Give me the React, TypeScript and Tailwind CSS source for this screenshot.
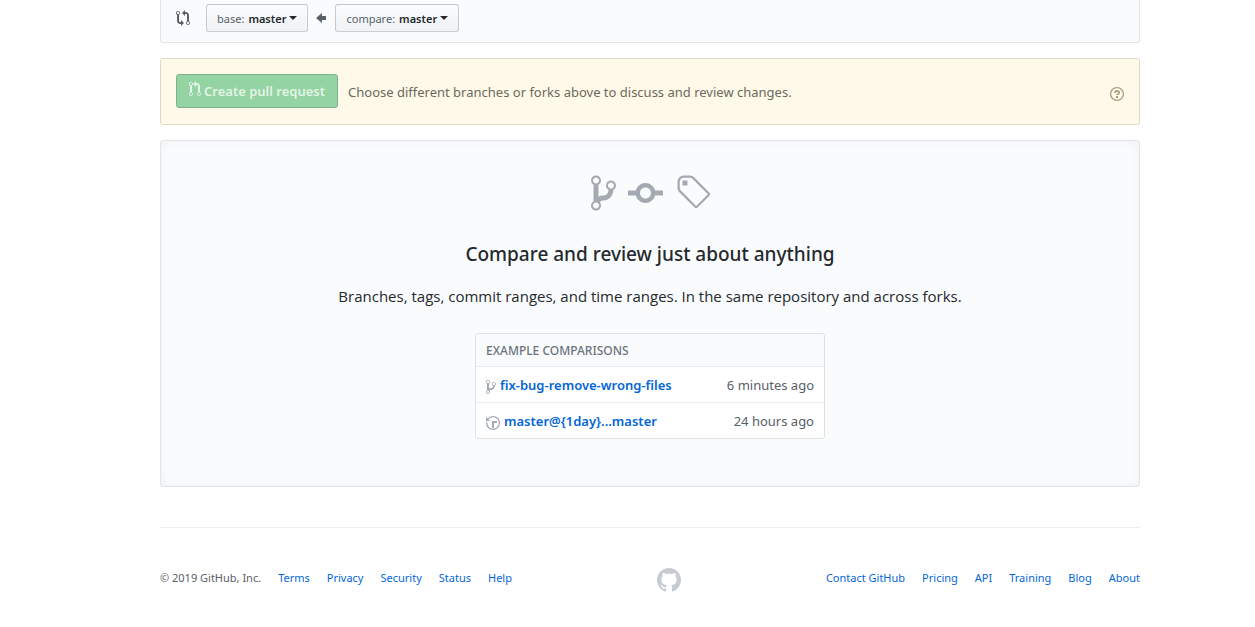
type IconProps = { path: string; box: string; className: string };

function Icon({ path, box, className }: IconProps) {
  return (
    <svg viewBox={box} className={className} fill="currentColor" fillRule="evenodd" aria-hidden="true">
      <path d={path} />
    </svg>
  );
}

const compareIcon =
  "M5 12H4c-.27-.02-.48-.11-.69-.31-.21-.2-.3-.42-.31-.69V4.72A1.993 1.993 0 0 0 2 1a1.993 1.993 0 0 0-1 3.72V11c.03.78.34 1.47.94 2.06.6.59 1.28.91 2.06.94h1v2l3-3-3-3v2zM2 1.8c.66 0 1.2.55 1.2 1.2 0 .65-.55 1.2-1.2 1.2C1.35 4.2.8 3.65.8 3c0-.65.55-1.2 1.2-1.2zm11 9.48V5c-.03-.78-.34-1.47-.94-2.06-.6-.59-1.28-.91-2.06-.94H9V0L6 3l3 3V4h1c.27.02.48.11.69.31.21.2.3.42.31.69v6.28A1.993 1.993 0 0 0 12 15a1.993 1.993 0 0 0 1-3.72zm-1 2.92c-.66 0-1.2-.55-1.2-1.2 0-.65.55-1.2 1.2-1.2.65 0 1.2.55 1.2 1.2 0 .65-.55 1.2-1.2 1.2z";
const pullIcon =
  "M11 11.28V5c-.03-.78-.34-1.47-.94-2.06C9.46 2.35 8.78 2.03 8 2H7V0L4 3l3 3V4h1c.27.02.48.11.69.31.21.2.3.42.31.69v6.28A1.993 1.993 0 0 0 10 15a1.993 1.993 0 0 0 1-3.72zm-1 2.92c-.66 0-1.2-.55-1.2-1.2 0-.65.55-1.2 1.2-1.2.65 0 1.2.55 1.2 1.2 0 .65-.55 1.2-1.2 1.2zM4 3c0-1.11-.89-2-2-2a1.993 1.993 0 0 0-1 3.72v6.56A1.993 1.993 0 0 0 2 15a1.993 1.993 0 0 0 1-3.72V4.72c.59-.34 1-.98 1-1.72zm-.8 10c0 .66-.55 1.2-1.2 1.2-.65 0-1.2-.55-1.2-1.2 0-.65.55-1.2 1.2-1.2.65 0 1.2.55 1.2 1.2zM2 4.2C1.34 4.2.8 3.65.8 3c0-.65.55-1.2 1.2-1.2.65 0 1.2.55 1.2 1.2 0 .65-.55 1.2-1.2 1.2z";
const branchIcon =
  "M10 5c0-1.11-.89-2-2-2a1.993 1.993 0 0 0-1 3.72v.3c-.02.52-.23.98-.63 1.38-.4.4-.86.61-1.38.63-.83.02-1.48.16-2 .45V4.72a1.993 1.993 0 0 0-1-3.72C.88 1 0 1.89 0 3a2 2 0 0 0 1 1.72v6.56c-.59.35-1 .99-1 1.72 0 1.11.89 2 2 2 1.11 0 2-.89 2-2 0-.53-.2-1-.53-1.36.09-.06.48-.41.59-.47.25-.11.56-.17.94-.17 1.05-.05 1.95-.45 2.75-1.25S8.95 7.77 9 6.73h-.02C9.59 6.37 10 5.73 10 5zM2 1.8c.66 0 1.2.55 1.2 1.2 0 .65-.55 1.2-1.2 1.2C1.35 4.2.8 3.65.8 3c0-.65.55-1.2 1.2-1.2zm0 12.41c-.66 0-1.2-.55-1.2-1.2 0-.65.55-1.2 1.2-1.2.65 0 1.2.55 1.2 1.2 0 .65-.55 1.2-1.2 1.2zm6-8c-.66 0-1.2-.55-1.2-1.2 0-.65.55-1.2 1.2-1.2.65 0 1.2.55 1.2 1.2 0 .65-.55 1.2-1.2 1.2z";
const commitIcon =
  "M10.86 7c-.45-1.72-2-3-3.86-3-1.86 0-3.41 1.28-3.86 3H0v2h3.14c.45 1.72 2 3 3.86 3 1.86 0 3.41-1.28 3.86-3H14V7h-3.14zM7 10.2c-1.22 0-2.2-.98-2.2-2.2 0-1.22.98-2.2 2.2-2.2 1.22 0 2.2.98 2.2 2.2 0 1.22-.98 2.2-2.2 2.2z";
const tagIcon =
  "M7.685 1.72a2.49 2.49 0 0 0-1.76-.726H3.48A2.5 2.5 0 0 0 .994 3.48v2.456c0 .656.269 1.292.726 1.76l6.024 6.024a.99.99 0 0 0 1.402 0l4.563-4.563a.99.99 0 0 0 0-1.402L7.685 1.72zM2.366 7.048A1.54 1.54 0 0 1 1.9 5.925V3.48c0-.874.716-1.58 1.58-1.58h2.456c.418 0 .825.159 1.123.467l6.104 6.094-4.702 4.702-6.094-6.115zm.626-4.066h1.989v1.989H2.982V2.982h.01z";
const arrowIcon = "M6 3L0 8l6 5v-3h4V6H6z";
const questionIcon =
  "M6 10h2v2H6v-2zm4-3.5C10 8.64 8 9 8 9H6c0-.55.45-1 1-1h.5c.28 0 .5-.22.5-.5v-1c0-.28-.22-.5-.5-.5h-1c-.28 0-.5.22-.5.5V7H4c0-1.5 1.5-3 3-3s3 1 3 2.5zM7 2.3c3.14 0 5.7 2.56 5.7 5.7s-2.56 5.7-5.7 5.7A5.71 5.71 0 0 1 1.3 8c0-3.14 2.56-5.7 5.7-5.7zM7 1C3.14 1 0 4.14 0 8s3.14 7 7 7 7-3.14 7-7-3.14-7-7-7z";
const historyIcon =
  "M8 13H6V6h5v2H8v5zM7 1C4.81 1 2.87 2.02 1.59 3.59L0 2v4h4L2.5 4.5C3.55 3.17 5.17 2.3 7 2.3c3.14 0 5.7 2.56 5.7 5.7s-2.56 5.7-5.7 5.7A5.71 5.71 0 0 1 1.3 8c0-.34.03-.67.09-1H.08C.03 7.33 0 7.66 0 8c0 3.86 3.14 7 7 7s7-3.14 7-7-3.14-7-7-7z";
const githubIcon =
  "M8 0C3.58 0 0 3.58 0 8c0 3.54 2.29 6.53 5.47 7.59.4.07.55-.17.55-.38 0-.19-.01-.82-.01-1.49-2.01.37-2.53-.49-2.69-.94-.09-.23-.48-.94-.82-1.13-.28-.15-.68-.52-.01-.53.63-.01 1.08.58 1.23.82.72 1.21 1.87.87 2.33.66.07-.52.28-.87.51-1.07-1.78-.2-3.64-.89-3.64-3.95 0-.87.31-1.59.82-2.15-.08-.2-.36-1.02.08-2.12 0 0 .67-.21 2.2.82.64-.18 1.32-.27 2-.27.68 0 1.36.09 2 .27 1.53-1.04 2.2-.82 2.2-.82.44 1.1.16 1.92.08 2.12.51.56.82 1.27.82 2.15 0 3.07-1.87 3.75-3.65 3.95.29.25.54.73.54 1.48 0 1.07-.01 1.93-.01 2.2 0 .21.15.46.55.38A8.013 8.013 0 0 0 16 8c0-4.42-3.58-8-8-8z";

function BranchButton({ label, branch }: { label: string; branch: string }) {
  return (
    <button
      type="button"
      aria-haspopup="menu"
      className="flex h-7 items-center rounded-[3px] border border-[#1b1f23]/20 bg-linear-to-b from-[#fafbfc] to-[#eff3f6] px-2.5 text-[11px] font-semibold text-[#24292e]"
    >
      <span className="mr-1 font-normal text-[#586069]">{label}:</span>
      {branch}
      <span className="ml-[3px] border-x-4 border-t-4 border-x-transparent border-t-[#24292e]" />
    </button>
  );
}

function FooterLinks({ links }: { links: string[] }) {
  return links.map((link) => (
    <li key={link}>
      <a href="#" className="text-[#0366d6] hover:underline">
        {link}
      </a>
    </li>
  ));
}

export default function App() {
  return (
    <div className="min-h-screen bg-white pl-[45px] font-['Noto_Sans',sans-serif] text-[13px] leading-[21px] text-[#24292e]">
      <div className="mx-auto max-w-[980px]">
        <main>
          <section
            aria-label="Branches to compare"
            className="flex items-center rounded-b-[3px] border border-t-0 border-[#e1e4e8] bg-[#fafbfc] px-[15px] pt-1 pb-2.5"
          >
            <Icon path={compareIcon} box="0 0 14 16" className="mr-4 h-4 w-3.5 text-[#586069]" />
            <BranchButton label="base" branch="master" />
            <Icon path={arrowIcon} box="0 0 10 16" className="mr-[9px] ml-2 h-4 w-2.5 text-[#586069]" />
            <BranchButton label="compare" branch="master" />
          </section>

          <section className="mt-[15px] flex items-start rounded-[3px] border border-[#dfd8c2] bg-[#fff9ea] px-[15px] pt-[15px] pb-4">
            <button
              type="button"
              disabled
              className="flex h-[34px] items-center rounded-[3px] border border-[#7fb28a] bg-[#94d3a2] px-3 font-semibold text-white/75"
            >
              <Icon path={pullIcon} box="0 0 12 16" className="mr-[3px] mb-1 h-4 w-3" />
              Create pull request
            </button>
            <p className="ml-2.5 pt-2 text-[#6b6a5b]">
              Choose different branches or forks above to discuss and review changes.
            </p>
            <a href="#" aria-label="Help" className="mt-3 ml-auto text-[#a89f80]">
              <Icon path={questionIcon} box="0 0 14 16" className="h-4 w-3.5" />
            </a>
          </section>

          <section className="mt-[15px] flex flex-col items-center rounded-[3px] border border-[#e1e4e8] bg-[#fafbfc] px-8 pt-8 pb-[47px] text-center shadow-[inset_0_0_10px_rgba(27,31,35,0.05)]">
            <div className="flex gap-3 text-[#a3aab1]">
              <Icon path={branchIcon} box="0 0 10 16" className="h-10 w-[25px]" />
              <Icon path={commitIcon} box="0 0 14 16" className="h-10 w-[35px]" />
              <Icon path={tagIcon} box="0 0 14 16" className="h-10 w-[35px]" />
            </div>
            <h3 className="mt-6 text-[19px] leading-[34px] font-medium">
              Compare and review just about anything
            </h3>
            <p className="mt-3 font-['Open_Sans',sans-serif] text-[15px] leading-[26px]">
              Branches, tags, commit ranges, and time ranges. In the same repository and across forks.
            </p>

            <table className="mt-6 w-[350px] border-separate border-spacing-0 rounded-[3px] border border-[#dfe2e5] bg-white text-left">
              <thead>
                <tr>
                  <th
                    colSpan={2}
                    scope="colgroup"
                    className="h-8 rounded-t-[3px] bg-[#fafbfc] px-2.5 text-[12px] font-medium text-[#6a737d]"
                  >
                    EXAMPLE COMPARISONS
                  </th>
                </tr>
              </thead>
              <tbody>
                <tr>
                  <td className="h-9 border-t border-[#eaecef] pt-0.5 pl-2.5">
                    <a href="#" className="flex items-center gap-1 font-semibold text-[#0366d6]">
                      <Icon path={branchIcon} box="0 0 10 16" className="mt-0.5 h-4 w-2.5 text-[#a3aab1]" />
                      fix-bug-remove-wrong-files
                    </a>
                  </td>
                  <td className="h-9 border-t border-[#eaecef] pt-0.5 pr-2.5 text-right text-[#586069]">6 minutes ago</td>
                </tr>
                <tr>
                  <td className="h-9 border-t border-[#eaecef] pt-0.5 pl-2.5">
                    <a href="#" className="flex items-center gap-1 font-semibold text-[#0366d6]">
                      <Icon path={historyIcon} box="0 0 14 16" className="mt-0.5 h-4 w-3.5 text-[#a3aab1]" />
                      {"master@{1day}...master"}
                    </a>
                  </td>
                  <td className="h-9 border-t border-[#eaecef] pt-0.5 pr-2.5 text-right text-[#586069]">24 hours ago</td>
                </tr>
              </tbody>
            </table>
          </section>
        </main>

        <footer className="mt-10 flex items-start justify-between border-t border-[#eaecef] pt-10 text-[11px] leading-5">
          <ul className="flex gap-[17px]">
            <li className="text-[#586069]">© 2019 GitHub, Inc.</li>
            <FooterLinks links={["Terms", "Privacy", "Security", "Status", "Help"]} />
          </ul>
          <a href="#" aria-label="GitHub" className="text-[#c6cbd1]">
            <Icon path={githubIcon} box="0 0 16 16" className="h-6 w-6" />
          </a>
          <ul className="flex gap-[17px]">
            <FooterLinks links={["Contact GitHub", "Pricing", "API", "Training", "Blog", "About"]} />
          </ul>
        </footer>
      </div>
    </div>
  );
}
